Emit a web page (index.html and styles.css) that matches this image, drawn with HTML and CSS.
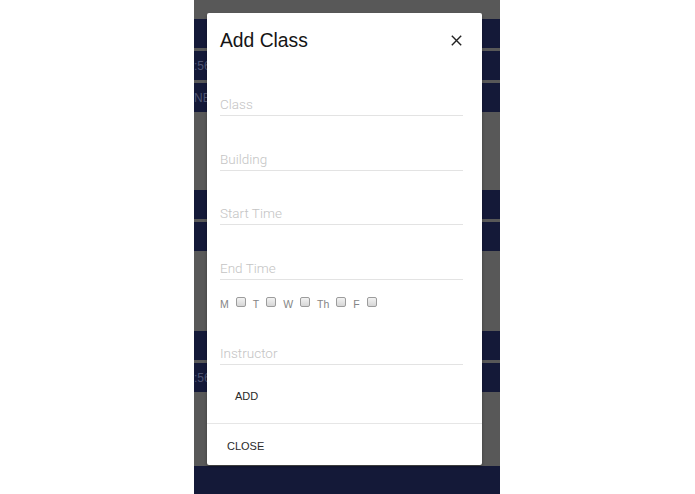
FILE: index.html
```html
<!DOCTYPE html>
<html>
<head>
<meta charset="utf-8">
<title>Add Class</title>
<link rel="stylesheet" href="styles.css">
</head>
<body>
<div class="column">
  <div class="group first">
    <div class="bar"></div>
    <div class="bar"><span class="bar-text">:56</span></div>
    <div class="bar"><span class="bar-text">NE</span></div>
  </div>
  <div class="group second">
    <div class="bar"></div>
    <div class="bar"></div>
  </div>
  <div class="group third">
    <div class="bar"></div>
    <div class="bar"><span class="bar-text">:56</span></div>
  </div>
  <div class="group fourth">
    <div class="bar"></div>
  </div>
</div>

<div class="modal">
  <div class="modal-content">
    <div class="modal-header">
      <h4 class="modal-title">Add Class</h4>
      <svg class="close-icon" width="11" height="11" viewBox="0 0 11 11">
        <path d="M0.8 0.8 L10.2 10.2 M10.2 0.8 L0.8 10.2" stroke="#222" stroke-width="1.4" fill="none"/>
      </svg>
    </div>
    <div class="field field-first"><input type="text" placeholder="Class"></div>
    <div class="field"><input type="text" placeholder="Building"></div>
    <div class="field"><input type="text" placeholder="Start Time"></div>
    <div class="field"><input type="text" placeholder="End Time"></div>
    <div class="days">
      <span class="day">M</span><input type="checkbox" class="box">
      <span class="day">T</span><input type="checkbox" class="box">
      <span class="day">W</span><input type="checkbox" class="box">
      <span class="day">Th</span><input type="checkbox" class="box">
      <span class="day">F</span><input type="checkbox" class="box">
    </div>
    <div class="field field-instructor"><input type="text" placeholder="Instructor"></div>
    <button class="btn-flat add-btn">ADD</button>
  </div>
  <div class="modal-footer">
    <button class="btn-flat close-btn">CLOSE</button>
  </div>
</div>
</body>
</html>
```

FILE: styles.css
```css
html, body {
  margin: 0;
  padding: 0;
  background: #ffffff;
  height: 100%;
  overflow: hidden;
}

body {
  font-family: "Liberation Sans", Arial, sans-serif;
  position: relative;
}

.column {
  width: 306px;
  height: 494px;
  margin: 0 0 0 194px;
  background: #585858;
  overflow: hidden;
}

.group {
  display: flex;
  flex-direction: column;
  gap: 3px;
}

.group.first { padding-top: 19px; }
.group.second { margin-top: 78px; }
.group.third { margin-top: 80px; }
.group.fourth { margin-top: 74px; }

.bar {
  height: 29px;
  background: #141938;
  display: flex;
  align-items: center;
}

.bar-text {
  color: #4f5572;
  font-size: 12px;
  padding-left: 0;
}

.modal {
  position: absolute;
  left: 207px;
  top: 13px;
  width: 275px;
  height: 452px;
  background: #ffffff;
  border-radius: 2px;
  box-shadow: 0 2px 3px rgba(0, 0, 0, 0.35);
  display: flex;
  flex-direction: column;
}

.modal-content {
  padding: 0 19px 0 13px;
  display: flex;
  flex-direction: column;
}

.modal-header {
  height: 55px;
  display: flex;
  align-items: center;
  justify-content: space-between;
}

.modal-title {
  margin: 0;
  font-size: 19.3px;
  font-weight: normal;
  color: #151515;
}

.close-icon {
  display: block;
  margin-right: 1px;
}

.field {
  margin-top: 23.5px;
}

.field.field-first { margin-top: 17px; }
.field.field-instructor { margin-top: 26px; }

.field input {
  display: block;
  width: 100%;
  box-sizing: border-box;
  height: 31px;
  padding: 8px 0 0 0;
  border: none;
  border-bottom: 1px solid #e3e3e3;
  outline: none;
  font-family: Roboto, "Liberation Sans", sans-serif;
  font-weight: 300;
  font-size: 13.5px;
  color: #333;
  background: transparent;
}

.field input::placeholder {
  color: #c4c4c4;
}

.days {
  margin-top: 16px;
  height: 12px;
  display: flex;
  align-items: center;
  gap: 7px;
}

.day {
  font-size: 10.5px;
  color: #858585;
  line-height: 12px;
  padding-top: 5px;
}

.box {
  appearance: none;
  -webkit-appearance: none;
  margin: 0;
  width: 10px;
  height: 10px;
  box-sizing: border-box;
  border: 1px solid #9c9c9c;
  border-radius: 2px;
  background: linear-gradient(#f2f2f2, #d6d6d6);
}

.btn-flat {
  border: none;
  background: transparent;
  font-family: "Liberation Sans", Arial, sans-serif;
  font-size: 11px;
  color: #2a2a2a;
  text-transform: uppercase;
  height: 36px;
  line-height: 36px;
  cursor: pointer;
}

.add-btn {
  align-self: flex-start;
  margin-top: 13.5px;
  padding: 0 15px;
}

.modal-footer {
  margin-top: auto;
  height: 42px;
  box-sizing: border-box;
  padding-top: 3px;
  border-top: 1px solid #e6e6e6;
  display: flex;
  align-items: center;
}

.close-btn {
  padding: 0 20px;
}
```
